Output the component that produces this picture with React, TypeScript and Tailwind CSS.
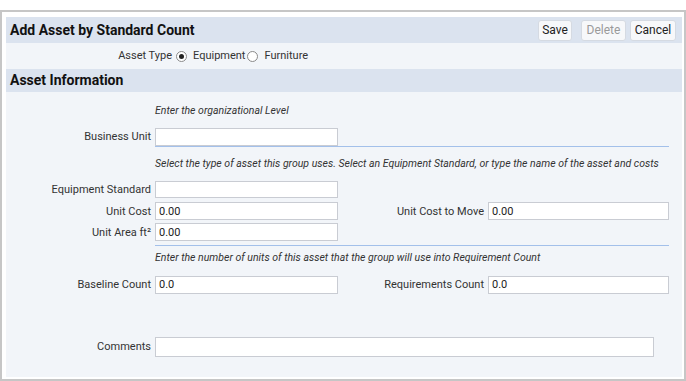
const font = { fontFamily: 'Roboto, "Open Sans", sans-serif' };

function Field({ value = '', width = 'w-[183px]', height = 'h-[18px]' }: { value?: string; width?: string; height?: string }) {
    return (
        <div className={`${width} ${height} bg-white border border-[#c9ccd3] text-[11px] text-[#222] px-[3px] flex items-center leading-none`}>
            {value}
        </div>
    );
}

function Label({ children, width = 'w-[149px]' }: { children: React.ReactNode; width?: string }) {
    return <div className={`${width} text-right text-[11px] text-[#333] pr-[4px] leading-none`}>{children}</div>;
}

function Note({ children }: { children: React.ReactNode }) {
    return <div className="pl-[149px] text-[10.5px] italic text-[#333] leading-none whitespace-nowrap">{children}</div>;
}

function Divider() {
    return <div className="ml-[149px] w-[514px] h-px bg-[#a3c0ea]" />;
}

function Radio({ checked }: { checked?: boolean }) {
    return (
        <span className="w-[11px] h-[11px] rounded-full border border-[#8a8a8a] bg-white flex items-center justify-center">
            {checked && <span className="w-[5px] h-[5px] rounded-full bg-[#222]" />}
        </span>
    );
}

export default function App() {
    return (
        <div className="w-[686px] h-[381px] bg-white pt-[10px]" style={font}>
            <div className="h-[371px] border-2 border-[#c6c6c6] pt-[5px] pl-[4px] pr-[2px] pb-[2px]">
                <div className="h-[360px] bg-[#f2f5f9]">
                    {/* Title bar */}
                    <div className="h-[26px] bg-[#dbe3ef] flex items-center justify-between pl-[4px] pr-[6px]">
                        <span className="text-[14px] font-bold text-[#111]">Add Asset by Standard Count</span>
                        <div className="flex text-[12px]">
                            <button className="w-[34px] h-[21px] bg-[#f7f8fa] border border-[#d5dae2] rounded-[3px] text-[#222]">Save</button>
                            <button className="ml-[9px] w-[45px] h-[21px] bg-[#f7f8fa] border border-[#d5dae2] rounded-[3px] text-[#9a9a9a]">Delete</button>
                            <button className="ml-[4px] w-[46px] h-[21px] bg-[#f7f8fa] border border-[#d5dae2] rounded-[3px] text-[#222]">Cancel</button>
                        </div>
                    </div>

                    {/* Asset type */}
                    <div className="h-[26px] flex items-center text-[11px] text-[#333]">
                        <div className="w-[170px] text-right pr-[4px]">Asset Type</div>
                        <Radio checked />
                        <span className="ml-[6px]">Equipment</span>
                        <span className="ml-[2px]"><Radio /></span>
                        <span className="ml-[6px]">Furniture</span>
                    </div>

                    {/* Section header */}
                    <div className="h-[23px] bg-[#dbe3ef] flex items-center pl-[4px]">
                        <span className="text-[14px] font-bold text-[#111]">Asset Information</span>
                    </div>

                    <div className="pt-[14px]">
                        <Note>Enter the organizational Level</Note>
                        <div className="flex items-center mt-[11px]">
                            <Label>Business Unit</Label>
                            <Field />
                        </div>
                        <Divider />
                        <div className="mt-[12px]">
                            <Note>Select the type of asset this group uses. Select an Equipment Standard, or type the name of the asset and costs</Note>
                        </div>
                        <div className="flex items-center mt-[12px]">
                            <Label>Equipment Standard</Label>
                            <Field height="h-[17px]" />
                        </div>
                        <div className="flex items-center mt-[4px]">
                            <Label>Unit Cost</Label>
                            <Field value="0.00" />
                            <Label width="w-[150px]">Unit Cost to Move</Label>
                            <Field value="0.00" width="w-[181px]" />
                        </div>
                        <div className="flex items-center mt-[3px]">
                            <Label>Unit Area ft²</Label>
                            <Field value="0.00" />
                        </div>
                        <div className="mt-[4px]">
                            <Divider />
                        </div>
                        <div className="mt-[7px]">
                            <Note>Enter the number of units of this asset that the group will use into Requirement Count</Note>
                        </div>
                        <div className="flex items-center mt-[12px]">
                            <Label>Baseline Count</Label>
                            <Field value="0.0" />
                            <Label width="w-[150px]">Requirements Count</Label>
                            <Field value="0.0" width="w-[181px]" />
                        </div>
                        <div className="flex items-center mt-[43px]">
                            <Label>Comments</Label>
                            <Field width="w-[499px]" height="h-[20px]" />
                        </div>
                    </div>
                </div>
            </div>
        </div>
    );
}
